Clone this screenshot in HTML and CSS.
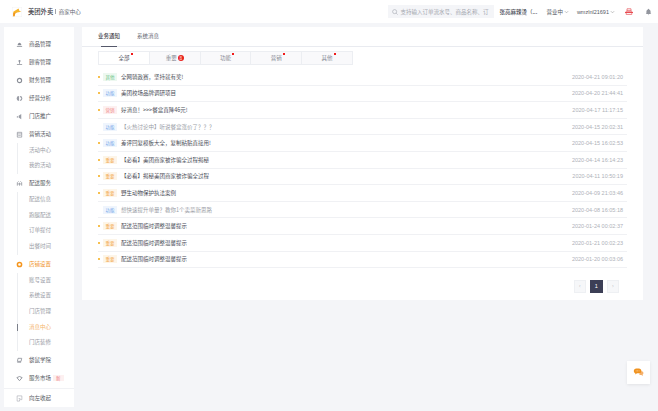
FILE: index.html
```html
<!DOCTYPE html>
<html lang="zh">
<head>
<meta charset="utf-8">
<title>美团外卖 商家中心</title>
<link rel="stylesheet" href="styles.css">
</head>
<body>
<header class="top">
  <div class="brand">
    <svg class="logo" viewBox="0 0 12 12"><rect x=".25" y=".25" width="11.500" height="11.500" fill="#fff" stroke="#f0f0f2" stroke-width=".5"/><path d="M1.500 11V5.800L7.800 1.800l1.200 3 2.200 1-5 .9-2.200 1.200L3 11z" fill="#f7b52c"/><path d="M1.500 11V7.500l2.500-.8L3 11z" fill="#f0931e"/></svg>
    <span class="brand-name">美团外卖</span><i class="brand-sep"></i><span class="brand-sub">商家中心</span>
  </div>
  <div class="top-right">
    <div class="search">
      <svg class="search-icon" viewBox="0 0 8 8"><circle cx="3.500" cy="3.500" r="2.700" fill="none" stroke="#9a9da6" stroke-width=".7"/><path d="M5.500 5.500L7.500 7.500" stroke="#9a9da6" stroke-width=".7"/></svg>
      <span class="search-text">支持输入订单流水号、商品名称、订</span>
    </div>
    <span class="shop">张亮麻辣烫（...</span>
    <span class="drop">营业中<svg class="caret" viewBox="0 0 6 4"><path d="M1 1l2 2 2-2" fill="none" stroke="#999" stroke-width=".7"/></svg></span>
    <span class="drop user">wmzlnl21691<svg class="caret" viewBox="0 0 6 4"><path d="M1 1l2 2 2-2" fill="none" stroke="#999" stroke-width=".7"/></svg></span>
    <svg class="printer" viewBox="0 0 10 10"><path d="M2.500 1h5v2.500h-5zM1.500 4h7v4h-7z" fill="none" stroke="#e8575c" stroke-width=".9"/><path d="M0 5h10v1.200H0z" fill="#e8474c"/></svg>
    <svg class="bell" viewBox="0 0 10 10"><path d="M5 .5c.5 0 .8.300.8.800C7.200 1.800 8 3 8 4.500V7l1 1H1l1-1V4.500C2 3 2.800 1.800 4.200 1.300c0-.5.300-.8.800-.8zM4 8.500h2L5 9.800z" fill="#93969e"/></svg>
  </div>
</header>

<div class="body">
  <aside class="side">
    <nav class="nav">
      <a class="nav-item"><svg class="ni" viewBox="0 0 8 8"><path d="M1.800 4.800C2 3 3 2 4 2s2 1 2.200 2.800zM1 5.800h6v.8H1z" fill="#8a8e97"/></svg>商品管理</a>
      <a class="nav-item"><svg class="ni" viewBox="0 0 8 8"><circle cx="4" cy="2.300" r="1.200" fill="#8a8e97"/><path d="M3.500 3.500h1v2h-1zM1 6h6v.8H1z" fill="#8a8e97"/></svg>顾客管理</a>
      <a class="nav-item"><svg class="ni" viewBox="0 0 8 8"><circle cx="4" cy="4" r="2.400" fill="none" stroke="#8a8e97" stroke-width="1.300"/></svg>财务管理</a>
      <a class="nav-item"><svg class="ni" viewBox="0 0 8 8"><path d="M3.500 1.200a2.800 2.800 0 0 0 0 5.600zM4.500 1.200a2.800 2.800 0 0 1 0 5.600V5.500a1.500 1.500 0 0 0 0-3z" fill="#9a9da6"/></svg>经营分析</a>
      <a class="nav-item"><svg class="ni" viewBox="0 0 8 8"><path d="M1 3.500h1v2H1zM3 3l3-2v6L3 5z" fill="#9a9da6"/></svg>门店推广</a>
      <a class="nav-item"><svg class="ni" viewBox="0 0 8 8"><path d="M1.500 1.500h5v5.500h-5z" fill="none" stroke="#8a8e97" stroke-width=".8"/><path d="M1.500 3.300h5M2.500 5h3" stroke="#8a8e97" stroke-width=".7"/></svg>营销活动</a>
      <div class="sub">
        <a class="sub-item">活动中心</a>
        <a class="sub-item">我的活动</a>
      </div>
      <a class="nav-item"><svg class="ni" viewBox="0 0 8 8"><path d="M1.500 6.500V3l1.500-1.500M6.500 6.500V3L5 1.500M1.500 4.500h5M4 3v3.500" fill="none" stroke="#8a8e97" stroke-width=".8"/></svg>配送服务</a>
      <div class="sub">
        <a class="sub-item">配送信息</a>
        <a class="sub-item">跑腿配送</a>
        <a class="sub-item">订单提付</a>
        <a class="sub-item">出餐时间</a>
      </div>
      <a class="nav-item nav-on"><svg class="ni" viewBox="0 0 8 8"><circle cx="4" cy="4" r="2.400" fill="none" stroke="#f5951d" stroke-width="1.700"/></svg>店铺设置</a>
      <div class="sub">
        <a class="sub-item">账号设置</a>
        <a class="sub-item">系统设置</a>
        <a class="sub-item">门店管理</a>
        <a class="sub-item sub-on">消息中心</a>
        <a class="sub-item">门店装修</a>
      </div>
      <a class="nav-item"><svg class="ni" viewBox="0 0 8 8"><path d="M2.300 1.500h4.200l-.7 3.500H1.600zM1.400 6h4.400" fill="none" stroke="#8a8e97" stroke-width=".9"/></svg>袋鼠学院</a>
      <a class="nav-item"><svg class="ni" viewBox="0 0 8 8"><path d="M1 3l3-1.300L7 3 4 6.500z" fill="none" stroke="#8a8e97" stroke-width="1"/></svg>服务市场<b class="new">新</b></a>
    </nav>
    <a class="collapse"><svg class="ni" viewBox="0 0 8 8"><path d="M1.300 1h5.400v4.300H4V7H1.300zM3 4h2" fill="none" stroke="#9a9da6" stroke-width=".6"/></svg>向左收起</a>
  </aside>

  <main class="card">
    <div class="tabs">
      <a class="tab tab-on">业务通知</a>
      <a class="tab">系统消息</a>
    </div>
    <div class="panel">
      <div class="subtabs">
        <a class="st st-on">全部<i class="rd"></i></a>
        <a class="st">重要<b class="count">8</b></a>
        <a class="st">功能<i class="rd"></i></a>
        <a class="st">营销<i class="rd"></i></a>
        <a class="st">其他<i class="rd"></i></a>
      </div>
      <ul class="list">
        <li class="row"><i class="dot"></i><b class="tag t-other">其他</b><span class="title">全网骑政赛，坚持就有奖!</span><time class="time">2020-04-21 09:01:20</time></li>
        <li class="row"><i class="dot"></i><b class="tag t-func">功能</b><span class="title">美团校场品牌调研项目</span><time class="time">2020-04-20 21:44:41</time></li>
        <li class="row"><i class="dot"></i><b class="tag t-mkt">营销</b><span class="title">好消息！&gt;&gt;&gt;餐盒直降46元!</span><time class="time">2020-04-17 11:17:15</time></li>
        <li class="row read"><i class="dot"></i><b class="tag t-func">功能</b><span class="title">【火热讨论中】听说餐盒涨价了？？？</span><time class="time">2020-04-15 20:02:31</time></li>
        <li class="row"><i class="dot"></i><b class="tag t-func">功能</b><span class="title">差评回复模板大全，复制粘贴直接用!</span><time class="time">2020-04-15 16:02:53</time></li>
        <li class="row"><i class="dot"></i><b class="tag t-imp">重要</b><span class="title">【必看】美团商家被诈骗全过程揭秘</span><time class="time">2020-04-14 16:14:23</time></li>
        <li class="row"><i class="dot"></i><b class="tag t-imp">重要</b><span class="title">【必看】揭秘美团商家被诈骗全过程</span><time class="time">2020-04-11 10:50:19</time></li>
        <li class="row"><i class="dot"></i><b class="tag t-imp">重要</b><span class="title">野生动物保护执法案例</span><time class="time">2020-04-09 21:03:46</time></li>
        <li class="row read"><i class="dot"></i><b class="tag t-func">功能</b><span class="title">想快速提升单量？教你1个卖菜新思路</span><time class="time">2020-04-08 16:05:18</time></li>
        <li class="row"><i class="dot"></i><b class="tag t-imp">重要</b><span class="title">配送范围临时调整温馨提示</span><time class="time">2020-01-24 00:02:37</time></li>
        <li class="row"><i class="dot"></i><b class="tag t-imp">重要</b><span class="title">配送范围临时调整温馨提示</span><time class="time">2020-01-21 00:02:23</time></li>
        <li class="row"><i class="dot"></i><b class="tag t-imp">重要</b><span class="title">配送范围临时调整温馨提示</span><time class="time">2020-01-20 00:03:06</time></li>
      </ul>
      <div class="pager">
        <a class="pg">‹</a>
        <a class="pg pg-on">1</a>
        <a class="pg">›</a>
      </div>
    </div>
  </main>
</div>

<button class="chat" type="button" aria-label="客服">
  <svg viewBox="0 0 12 10" class="chat-icon"><path d="M7.500 3.500h2c1.200 0 2 .9 2 2.100 0 .9-.4 1.500-1 1.800l.4 1.400-1.800-1H7z" fill="#f5b06a"/><path d="M3.500.5h3c1.500 0 2.700 1.200 2.700 2.700S8 5.900 6.500 5.900H4.300L2.500 7.300V5.700C1.300 5.300.8 4.300.8 3.200.8 1.700 2 .5 3.500.5z" fill="#f0921e"/><path d="M3 3.200h.8M4.600 3.200h.8M6.200 3.200H7" stroke="#fff" stroke-width=".7"/></svg>
</button>
</body>
</html>
```
FILE: styles.css
```css
* { box-sizing: border-box; }
html, body { margin: 0; padding: 0; }
body {
  width: 658px;
  height: 411px;
  overflow: hidden;
  background: #f4f5f8;
  color: #4a4d57;
  font-family: "Noto Sans CJK SC", "Liberation Sans", sans-serif;
  font-size: 5.5px;
  line-height: 8px;
}
a { color: inherit; text-decoration: none; }
ul { list-style: none; margin: 0; padding: 0; }
i, b { font-style: normal; font-weight: 400; }

.top {
  height: 23px;
  background: #fff;
  display: flex;
  align-items: center;
  justify-content: space-between;
  padding: 0 6px 0 12px;
}
.brand { display: flex; align-items: center; }
.logo { width: 10px; height: 10px; margin-right: 6px; }
.brand-name { font-size: 6.300px; font-weight: 500; color: #3f4149; }
.brand-sep { width: 1px; height: 5px; background: #a0a3ab; margin: 0 2.500px 0 2px; }
.brand-sub { font-size: 5.500px; color: #62656f; }
.top-right { display: flex; align-items: center; }
.search {
  width: 106px;
  height: 13px;
  background: #f4f5f8;
  display: flex;
  align-items: center;
  padding: 0 4px;
  margin-right: 5px;
}
.search-icon { width: 6px; height: 6px; margin-right: 2px; flex: none; }
.search-text { flex: 1; white-space: nowrap; font-size: 5.500px; color: #a4a7af; }
.shop { width: 47px; white-space: nowrap; font-size: 5.500px; font-weight: 500; color: #4a4d57; }
.drop { display: flex; align-items: center; margin-right: 8px; font-size: 5.500px; white-space: nowrap; color: #55585f; }
.user { margin-right: 10px; font-family: "Liberation Sans", sans-serif; }
.caret { width: 5px; height: 4px; margin-left: 1px; }
.printer { width: 8px; height: 8px; margin-right: 12px; }
.bell { width: 7px; height: 8px; }

.body { display: flex; align-items: flex-start; padding: 4px 15px 0 4px; gap: 8px; }
.side {
  width: 70px;
  height: 380px;
  background: #fff;
  display: flex;
  flex-direction: column;
  flex: none;
}
.nav { padding-top: 8px; flex: 1; }
.nav-item {
  display: flex;
  align-items: center;
  height: 18px;
  padding-left: 12px;
  color: #555862;
  white-space: nowrap;
}
.ni { width: 7px; height: 7px; margin-right: 6px; flex: none; }
.nav-on { color: #f0921e; }
.new {
  margin-left: 2px;
  padding: 0 3px;
  background: #fdf0f0;
  color: #ee7a7a;
  font-size: 4.500px;
  line-height: 6px;
}
.sub { margin: -.3px 0 .6px 13px; border-left: 1px solid #eceef1; padding-left: 11px; }
.sub-item { display: block; height: 15.600px; line-height: 15.600px; color: #9a9da6; white-space: nowrap; position: relative; }
.sub-on { color: #f5b56c; }
.sub-on::before {
  content: "";
  position: absolute;
  left: -12px;
  top: 4px;
  width: 1px;
  height: 7px;
  background: #7b7f8a;
}
.collapse {
  height: 19px;
  display: flex;
  align-items: center;
  padding-left: 12px;
  border-top: 1px solid #f1f2f5;
  color: #555862;
}

.card { flex: 1; height: 273px; background: #fff; display: flex; flex-direction: column; }
.tabs {
  height: 20px;
  flex: none;
  border-bottom: 1px solid #e9ebf0;
  display: flex;
  padding-left: 16px;
  gap: 17px;
}
.tab { line-height: 19px; color: #666973; position: relative; height: 20px; }
.tab-on { color: #3f4149; font-weight: 500; }
.tab-on::after {
  content: "";
  position: absolute;
  left: 3px;
  right: 3px;
  bottom: 0;
  height: 1px;
  background: #55586a;
}
.panel { padding: 4px 16px 0; flex: 1; display: flex; flex-direction: column; }
.subtabs { display: flex; width: 255px; height: 14px; border: 1px solid #eceef2; background: #f9f9fb; }
.st {
  flex: 1;
  display: flex;
  align-items: center;
  justify-content: center;
  color: #888b95;
  position: relative;
  border-left: 1px solid #eceef2;
}
.st:first-child { border-left: 0; }
.st-on { background: #fff; color: #4a4d57; }
.rd { position: absolute; right: 16px; top: 1px; width: 2px; height: 2px; background: #f01b1b; }
.count {
  width: 6px;
  height: 6px;
  margin-left: 1px;
  border-radius: 50%;
  background: #e8211d;
  color: #fff;
  font-size: 4.500px;
  line-height: 6px;
  text-align: center;
}
.list { margin-top: 4px; }
.row {
  height: 16.600px;
  display: flex;
  align-items: center;
  border-bottom: 1px solid #f0f1f4;
  padding: 0 4px 0 0;
}
.dot { width: 2px; height: 2px; background: #f7c04f; margin-right: 3px; flex: none; }
.tag {
  width: 14px;
  height: 8px;
  text-align: center;
  font-size: 4.500px;
  line-height: 8px;
  margin-right: 4px;
  flex: none;
}
.t-other { background: #edf8f0; color: #6cc48b; }
.t-func { background: #eff5fd; color: #76a8ea; }
.t-mkt { background: #fdf0f0; color: #f08686; }
.t-imp { background: #fdf5e8; color: #f3a94f; }
.title { flex: 1; white-space: nowrap; color: #4a4d57; }
.read .dot { background: transparent; }
.read .title { color: #9a9da6; }
.time { font-size: 5.500px; color: #aeb1b8; font-family: "Liberation Sans", sans-serif; white-space: nowrap; }
.pager { display: flex; justify-content: flex-end; gap: 4px; margin-top: 12px; padding-right: 8px; }
.pg {
  width: 12.500px;
  height: 13px;
  background: #f6f7f9;
  border: 1px solid #eef0f3;
  color: #aeb1b8;
  text-align: center;
  line-height: 11px;
  font-size: 5.500px;
}
.pg-on { background: #3c3f56; border-color: #3c3f56; color: #fff; font-family: "Liberation Sans", sans-serif; }
.chat {
  position: absolute;
  left: 627px;
  top: 361px;
  width: 23px;
  height: 23px;
  padding: 0;
  border: 0;
  background: #fff;
  box-shadow: 0 1px 3px rgba(0,0,0,.08);
  display: flex;
  align-items: center;
  justify-content: center;
}
.chat-icon { width: 11px; height: 9px; }
```
